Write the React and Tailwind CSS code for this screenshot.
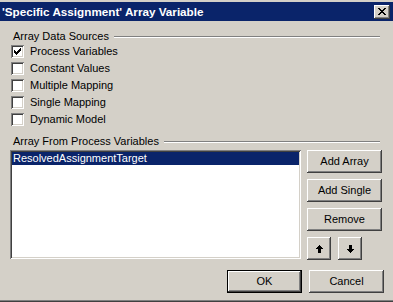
import React from 'react'

const raised = 'shadow-[inset_-1px_-1px_#404040,inset_1px_1px_#ffffff,inset_-2px_-2px_#808080,inset_2px_2px_#d4d0c8]'
const sunken = 'shadow-[inset_1px_1px_#808080,inset_-1px_-1px_#ffffff,inset_2px_2px_#404040,inset_-2px_-2px_#d4d0c8]'

function Check() {
  return (
    <svg width="7" height="7" viewBox="0 0 7 7" shapeRendering="crispEdges">
      <path d="M0 2h1v1h1v1h1v-1h1v-1h1v-1h1v-1h1v3h-1v1h-1v1h-1v1h-1v1h-1v-1h-1v-1h-1v-1h-1z" fill="#000" />
    </svg>
  )
}

function Checkbox({ label, checked }) {
  return (
    <div className="flex h-[17px] items-center">
      <div className={`flex h-[13px] w-[13px] items-center justify-center bg-white ${sunken}`}>
        {checked && <Check />}
      </div>
      <span className="ml-[6px]">{label}</span>
    </div>
  )
}

function GroupLabel({ children }) {
  return (
    <div className="flex h-[13px] items-center pl-[13px] pr-[13px] leading-[13px]">
      <span>{children}</span>
      <div className="ml-[5px] h-[2px] flex-1 border-t border-b border-t-[#808080] border-b-white" />
    </div>
  )
}

function Button({ children, className = '' }) {
  return (
    <button type="button" className={`flex h-[23px] w-[75px] items-center justify-center bg-[#d4d0c8] ${raised} ${className}`}>
      {children}
    </button>
  )
}

function Arrow({ down }) {
  return (
    <svg width="7" height="8" viewBox="0 0 7 8" shapeRendering="crispEdges" className={down ? 'rotate-180' : ''}>
      <path d="M3 0h1v1h1v1h1v1h1v1h-2v4h-3v-4h-2v-1h1v-1h1v-1h1z" fill="#000" />
    </svg>
  )
}

export default function App() {
  return (
    <div className="flex h-[302px] w-[393px] flex-col bg-[#d4d0c8] pt-[2px] font-['Liberation_Sans',Arial,sans-serif] text-[11px] text-black">
      <div className="flex h-[19px] items-center justify-between bg-[#0a246a] pl-[2px] pr-[3px]">
        <span className="text-[11.7px] font-bold text-white">'Specific Assignment' Array Variable</span>
        <div className={`flex h-[14px] w-[16px] items-center justify-center bg-[#d4d0c8] ${raised}`}>
          <svg width="8" height="7" viewBox="0 0 8 7" shapeRendering="crispEdges">
            <path d="M0 0h2v1h1v1h2v-1h1v-1h2v1h-1v1h-1v1h-1v1h1v1h1v1h1v1h-2v-1h-1v-1h-2v1h-1v1h-2v-1h1v-1h1v-1h1v-1h-1v-1h-1v-1h-1z" fill="#000" />
          </svg>
        </div>
      </div>

      <div className="mt-[9px]">
        <GroupLabel>Array Data Sources</GroupLabel>
        <div className="ml-[11px] flex flex-col">
          <Checkbox label="Process Variables" checked />
          <Checkbox label="Constant Values" />
          <Checkbox label="Multiple Mapping" />
          <Checkbox label="Single Mapping" />
          <Checkbox label="Dynamic Model" />
        </div>
      </div>

      <div className="mt-[7px]">
        <GroupLabel>Array From Process Variables</GroupLabel>
        <div className="mt-[2px] flex pl-[10px]">
          <div className={`h-[109px] w-[291px] bg-white p-[2px] ${sunken}`}>
            <div className="flex h-[13px] items-center bg-[#0a246a] pl-[1px] text-white">ResolvedAssignmentTarget</div>
          </div>
          <div className="ml-[6px] flex flex-col gap-[6px]">
            <Button>Add Array</Button>
            <Button>Add Single</Button>
            <Button>Remove</Button>
            <div className="flex gap-[7px]">
              <Button className="!w-[24px]"><Arrow /></Button>
              <Button className="!w-[24px]"><Arrow down /></Button>
            </div>
          </div>
        </div>
      </div>

      <div className="mt-[10px] flex justify-end gap-[7px] pr-[9px]">
        <div className="border border-black">
          <Button className="!h-[21px] !w-[73px]">OK</Button>
        </div>
        <Button>Cancel</Button>
      </div>

      <div className="mt-auto h-[2px] border-t border-b border-t-[#808080] border-b-[#404040]" />
    </div>
  )
}
